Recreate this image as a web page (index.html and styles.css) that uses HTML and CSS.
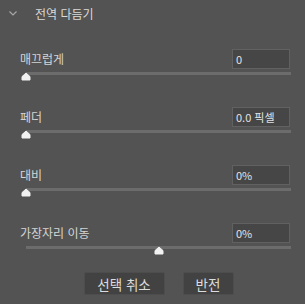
FILE: index.html
```html
<!DOCTYPE html>
<html lang="ko">
<head>
    <meta charset="UTF-8">
    <title>전역 다듬기</title>
    <link rel="stylesheet" href="styles.css">
</head>
<body>
    <div class="panel">
        <div class="header">
            <svg class="chevron" width="8" height="5" viewBox="0 0 8 5">
                <path d="M0.5 0.5 L4 4 L7.5 0.5" fill="none" stroke="#a9a9a9" stroke-width="1.1"/>
            </svg>
            <span class="title">전역 다듬기</span>
        </div>

        <div class="section">
            <div class="row">
                <span class="label">매끄럽게</span>
                <div class="field">0</div>
            </div>
            <div class="slider">
                <div class="track"></div>
                <svg class="thumb" style="left: 1px" width="10" height="9" viewBox="0 0 10 9">
                    <path d="M5 1 L9 4.6 V8 H1 V4.6 Z" fill="#f2f2f2" stroke="#f2f2f2" stroke-linejoin="round"/>
                </svg>
            </div>
        </div>

        <div class="section">
            <div class="row">
                <span class="label">페더</span>
                <div class="field">0.0 픽셀</div>
            </div>
            <div class="slider">
                <div class="track"></div>
                <svg class="thumb" style="left: 1px" width="10" height="9" viewBox="0 0 10 9">
                    <path d="M5 1 L9 4.6 V8 H1 V4.6 Z" fill="#f2f2f2" stroke="#f2f2f2" stroke-linejoin="round"/>
                </svg>
            </div>
        </div>

        <div class="section">
            <div class="row">
                <span class="label">대비</span>
                <div class="field">0%</div>
            </div>
            <div class="slider">
                <div class="track"></div>
                <svg class="thumb" style="left: 1px" width="10" height="9" viewBox="0 0 10 9">
                    <path d="M5 1 L9 4.6 V8 H1 V4.6 Z" fill="#f2f2f2" stroke="#f2f2f2" stroke-linejoin="round"/>
                </svg>
            </div>
        </div>

        <div class="section">
            <div class="row">
                <span class="label">가장자리 이동</span>
                <div class="field">0%</div>
            </div>
            <div class="slider">
                <div class="track"></div>
                <svg class="thumb" style="left: 133.5px" width="10" height="9" viewBox="0 0 10 9">
                    <path d="M5 1 L9 4.6 V8 H1 V4.6 Z" fill="#f2f2f2" stroke="#f2f2f2" stroke-linejoin="round"/>
                </svg>
            </div>
        </div>

        <div class="buttons">
            <button class="btn btn-wide">선택 취소</button>
            <button class="btn">반전</button>
        </div>
    </div>
</body>
</html>
```

FILE: styles.css
```css
body {
    margin: 0;
    background: #535353;
    font-family: "Noto Sans CJK KR", "Noto Sans", sans-serif;
    color: #d5d5d5;
}
.panel {
    width: 305px;
    height: 304px;
}
.header {
    display: flex;
    align-items: center;
    height: 27px;
    padding-left: 9px;
}
.chevron { display: block; }
.title {
    margin-left: 18px;
    font-size: 12px;
    color: #dadada;
}
.section {
    margin: 22px 14px 0 20px;
}
.section + .section { margin-top: 26px; }
.row {
    display: flex;
    align-items: center;
    justify-content: space-between;
    height: 20px;
}
.label {
    font-size: 12px;
    line-height: 20px;
}
.field {
    box-sizing: border-box;
    width: 58px;
    height: 20px;
    margin-right: 1px;
    padding-left: 3px;
    background: #464646;
    border: 1px solid #616161;
    font-size: 11px;
    line-height: 18px;
    color: #e2e2e2;
}
.slider {
    position: relative;
    height: 9px;
    margin-top: 3px;
}
.track {
    margin-left: 6px;
    margin-top: 1px;
    height: 3px;
    background: #6c6c6c;
}
.thumb {
    position: absolute;
    top: 0;
}
.buttons {
    display: flex;
    justify-content: center;
    gap: 18px;
    margin-top: 17px;
    padding-left: 12px;
}
.btn {
    box-sizing: border-box;
    height: 23px;
    width: 51px;
    padding: 0;
    background: #424242;
    border: 1px solid #4d4d4d;
    border-radius: 2px;
    font-family: "Noto Sans CJK KR", "Noto Sans", sans-serif;
    font-size: 13.5px;
    color: #dcdcdc;
}
.btn-wide { width: 81px; }
```
